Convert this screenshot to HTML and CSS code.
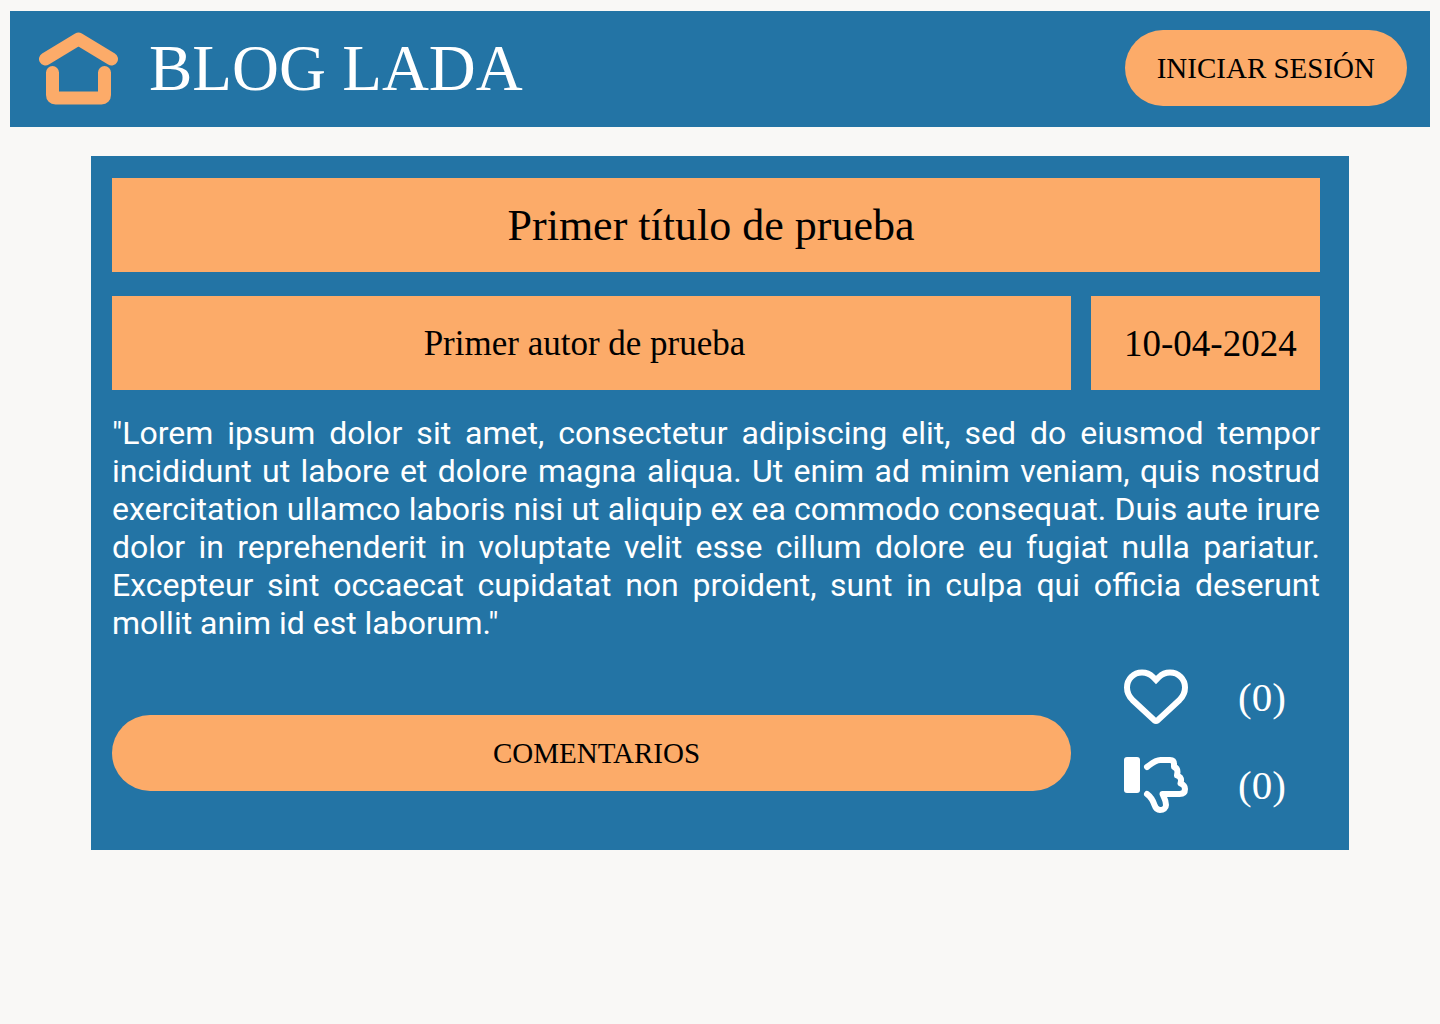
FILE: index.html
```html
<!DOCTYPE html>
<html lang="es">
<head>
  <meta charset="utf-8">
  <meta name="viewport" content="width=device-width, initial-scale=1">
  <title>Blog LADA</title>
  <link rel="stylesheet" href="styles.css">
</head>
<body>
  <header class="site-header">
    <a class="home-link" href="#" aria-label="Inicio">
      <svg class="home-icon" viewBox="0 0 80 74" aria-hidden="true">
        <path d="M6.500 28 39.500 8 72.500 28"/>
        <path d="M13.500 41.500V64Q13.500 67 16.500 67H62.500Q65.500 67 65.500 64V41.500"/>
      </svg>
    </a>
    <h1 class="site-title">BLOG LADA</h1>
    <button class="pill login" type="button">INICIAR SESIÓN</button>
  </header>

  <main>
    <article class="post">
      <h2 class="panel post-title">Primer título de prueba</h2>
      <div class="panel post-author">Primer autor de prueba</div>
      <time class="panel post-date" datetime="2024-04-10">10-04-2024</time>
      <p class="post-text">"Lorem ipsum dolor sit amet, consectetur adipiscing elit, sed do eiusmod tempor incididunt ut labore et dolore magna aliqua. Ut enim ad minim veniam, quis nostrud exercitation ullamco laboris nisi ut aliquip ex ea commodo consequat. Duis aute irure dolor in reprehenderit in voluptate velit esse cillum dolore eu fugiat nulla pariatur. Excepteur sint occaecat cupidatat non proident, sunt in culpa qui officia deserunt mollit anim id est laborum."</p>
      <button class="pill comments" type="button">COMENTARIOS</button>
      <div class="reactions">
        <button class="reaction" type="button" aria-label="Me gusta (0)">
          <svg class="reaction-icon heart" viewBox="0 0 64 56" aria-hidden="true">
            <path d="M32 11 29 8C26 5 22.500 3.500 18 3.500 9.500 3.500 3 10 3 18.500 3 23 5 27.500 8.500 31L30.500 51.500Q32 52.500 33.500 51.500L55.500 31C59 27.500 61 23 61 18.500 61 10 54.500 3.500 46 3.500 41.500 3.500 38 5 35 8Z"/>
          </svg>
          <span>(0)</span>
        </button>
        <button class="reaction" type="button" aria-label="No me gusta (0)">
          <svg class="reaction-icon" viewBox="0 0 64 56" aria-hidden="true">
            <rect class="cuff" width="16" height="36" rx="3"/>
            <path d="M23 10C27 7 31 3 36.500 3H46Q50 3 50 7V10Q53.500 11 53.500 15L53 18.500Q57.500 20 57 24L56.500 26.500Q61 28 61 32 61 37 55.500 37H38.500C40 41 42 43 42 48 42 51 39.500 53 36 53 33 53 31.500 51 30.500 48 29 43.500 27 40 23 37"/>
          </svg>
          <span>(0)</span>
        </button>
      </div>
    </article>
  </main>
</body>
</html>
```
FILE: styles.css
```css
:root {
  --blue: #2374a5;
  --orange: #fcab69;
  --paper: #f9f8f6;
  --display: "Liberation Serif", serif;
}

* {
  box-sizing: border-box;
}

body {
  margin: 0;
  padding: 11px 10px;
  background: var(--paper);
  font-family: var(--display);
}

h1, h2, p {
  margin: 0;
  font-weight: 400;
}

button {
  border: 0;
  font-family: inherit;
  cursor: pointer;
}

.site-header {
  display: flex;
  align-items: center;
  padding: 19px 23px 21px 29px;
  background: var(--blue);
}

.home-link,
.home-icon {
  display: block;
}

.home-icon {
  width: 80px;
  height: 74px;
  fill: none;
  stroke: var(--orange);
  stroke-width: 13;
  stroke-linecap: round;
  stroke-linejoin: round;
}

.site-title {
  margin-left: 30px;
  color: #fff;
  font-size: 65px;
  line-height: 76px;
}

.pill {
  padding: 0 32px;
  border-radius: 38px;
  background: var(--orange);
  color: #000;
  font-size: 29px;
  line-height: 76px;
}

.login {
  margin-left: auto;
}

.post {
  display: grid;
  grid-template-columns: 1fr 229px;
  column-gap: 20px;
  row-gap: 24px;
  margin: 29px 81px 0;
  padding: 22px 29px 37px 21px;
  background: var(--blue);
}

.panel {
  padding: 2px 24px 0 10px;
  background: var(--orange);
  color: #000;
  line-height: 92px;
  text-align: center;
  white-space: nowrap;
}

.post-title {
  grid-column: 1 / -1;
  padding-right: 20px;
  font-size: 44px;
}

.post-author {
  font-size: 35px;
}

.post-date {
  padding-left: 33px;
  font-size: 37px;
}

.post-text {
  grid-column: 1 / -1;
  color: #fff;
  font-family: Roboto, sans-serif;
  font-size: 32px;
  line-height: 38px;
  text-align: justify;
}

.comments {
  align-self: end;
  margin-bottom: 22px;
  padding: 0 22px 0 32px;
}

.reactions {
  display: grid;
  justify-items: start;
  gap: 32px;
  padding: 3px 0 0 33px;
}

.reaction {
  display: flex;
  align-items: center;
  gap: 50px;
  padding: 0;
  background: none;
  color: #fff;
  font-size: 41px;
  line-height: 56px;
}

.reaction-icon {
  width: 64px;
  height: 56px;
  fill: none;
  stroke: #fff;
  stroke-width: 6;
  stroke-linecap: round;
  stroke-linejoin: round;
}

.heart {
  stroke-linejoin: miter;
}

.cuff {
  fill: #fff;
  stroke: none;
}
```
